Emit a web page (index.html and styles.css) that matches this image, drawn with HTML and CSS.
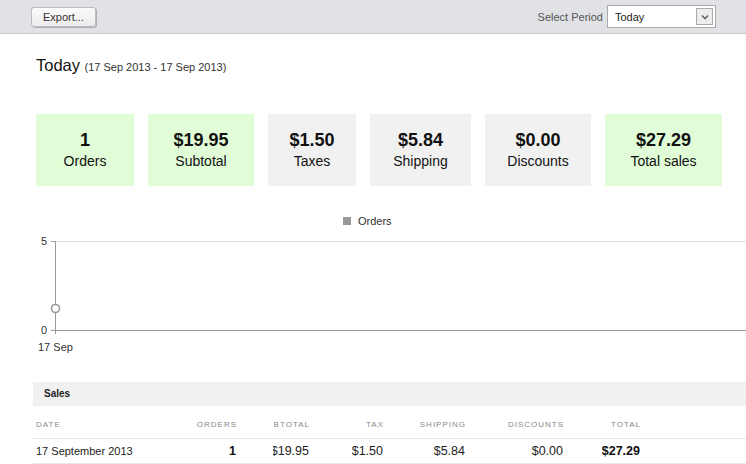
FILE: index.html
```html
<!DOCTYPE html>
<html>
<head>
<meta charset="utf-8">
<link rel="stylesheet" href="styles.css">
</head>
<body>
<div class="topbar">
  <button class="btn">Export...</button>
  <div class="period">
    <span class="period-label">Select Period</span>
    <div class="select">
      <span class="select-value">Today</span>
      <span class="select-arrow">
        <svg width="14" height="14" viewBox="0 0 14 14"><path d="M4 5.5 L7 8.5 L10 5.5" fill="none" stroke="#666" stroke-width="1.6"/></svg>
      </span>
    </div>
  </div>
</div>

<div class="title">
  <span class="title-main">Today</span>
  <span class="title-range">(17 Sep 2013 - 17 Sep 2013)</span>
</div>

<div class="cards">
  <div class="card green"><div class="val">1</div><div class="lbl">Orders</div></div>
  <div class="card green"><div class="val">$19.95</div><div class="lbl">Subtotal</div></div>
  <div class="card grey"><div class="val">$1.50</div><div class="lbl">Taxes</div></div>
  <div class="card grey"><div class="val">$5.84</div><div class="lbl">Shipping</div></div>
  <div class="card grey"><div class="val">$0.00</div><div class="lbl">Discounts</div></div>
  <div class="card green"><div class="val">$27.29</div><div class="lbl">Total sales</div></div>
</div>

<svg class="chart" width="746" height="155" viewBox="0 0 746 155">
  <rect x="343" y="12" width="8" height="8" fill="#999"/>
  <text x="358" y="20" class="ct">Orders</text>
  <line x1="55" y1="36.5" x2="746" y2="36.5" stroke="#ddd" stroke-width="1"/>
  <line x1="51" y1="36.5" x2="55" y2="36.5" stroke="#999" stroke-width="1"/>
  <line x1="55.5" y1="36" x2="55.5" y2="129" stroke="#999" stroke-width="1"/>
  <line x1="51" y1="125.5" x2="746" y2="125.5" stroke="#999" stroke-width="1"/>
  <text x="47" y="40" class="ct" text-anchor="end">5</text>
  <text x="47" y="129" class="ct" text-anchor="end">0</text>
  <circle cx="55.5" cy="103.5" r="4" fill="#fff" stroke="#999" stroke-width="1.6"/>
  <text x="38" y="146" class="ct">17 Sep</text>
</svg>

<div class="panel">Sales</div>
<div class="table">
  <div class="row head">
    <div class="c left">Date</div>
    <div class="c">Orders</div>
    <div class="c clip"><span>Subtotal</span></div>
    <div class="c">Tax</div>
    <div class="c">Shipping</div>
    <div class="c">Discounts</div>
    <div class="c">Total</div>
    <div class="c"></div>
  </div>
  <div class="row data">
    <div class="c left date">17 September 2013</div>
    <div class="c bold">1</div>
    <div class="c clip"><span>$19.95</span></div>
    <div class="c">$1.50</div>
    <div class="c">$5.84</div>
    <div class="c">$0.00</div>
    <div class="c bold">$27.29</div>
    <div class="c"></div>
  </div>
</div>
</body>
</html>
```
FILE: styles.css
```css
* { box-sizing: border-box; }
body {
  margin: 0;
  font-family: "Liberation Sans", Arial, sans-serif;
  color: #222;
  background: #fff;
  width: 746px;
  overflow: hidden;
}
.topbar {
  height: 34px;
  background: #e0e2e5;
  border-bottom: 1px solid #c6c8cb;
  display: flex;
  align-items: flex-start;
  padding-left: 31px;
}
.btn {
  margin: 7px 0 0 0;
  width: 65px;
  height: 20px;
  padding: 0;
  font-family: "Liberation Sans", Arial, sans-serif;
  font-size: 11px;
  color: #333;
  background: linear-gradient(#fbfbfb, #ececec);
  border: 1px solid #bcbcbc;
  border-radius: 3px;
  box-shadow: 1px 1px 0 rgba(0,0,0,0.22);
}
.period {
  margin-left: auto;
  margin-right: 30px;
  margin-top: 5px;
  display: flex;
  align-items: center;
}
.period-label {
  font-size: 11px;
  color: #555;
  margin-right: 4px;
}
.select {
  width: 109px;
  height: 23px;
  background: #fff;
  border: 1px solid #aaa;
  display: flex;
  align-items: center;
  padding-left: 7px;
  padding-right: 2px;
}
.select-value {
  font-size: 11px;
  color: #222;
  flex: 1;
}
.select-arrow {
  width: 17px;
  height: 17px;
  border: 1px solid #aaa;
  background: #ececec;
  display: flex;
  align-items: center;
  justify-content: center;
}
.title {
  padding: 21px 0 0 36px;
  height: 41px;
  line-height: 20px;
}
.title-main {
  font-size: 16.5px;
  color: #111;
}
.title-range {
  font-size: 11px;
  color: #333;
}
.cards {
  margin-top: 39px;
  padding-left: 36px;
  display: flex;
  gap: 14px;
}
.card {
  height: 72px;
  padding-top: 16px;
  display: flex;
  flex-direction: column;
  align-items: center;
  color: #111;
}
.card:nth-child(1) { width: 98px; }
.card:nth-child(2) { width: 106px; }
.card:nth-child(3) { width: 88px; }
.card:nth-child(4) { width: 101px; }
.card:nth-child(5) { width: 106px; }
.card:nth-child(6) { width: 117px; }
.green { background: #e1fdd8; }
.grey { background: #f1f1f1; }
.val {
  font-size: 18px;
  font-weight: bold;
  line-height: 20px;
}
.lbl {
  font-size: 14px;
  line-height: 20px;
  margin-top: 1px;
}
.chart {
  display: block;
  margin-top: 19px;
}
.ct {
  font-family: "Liberation Sans", Arial, sans-serif;
  font-size: 11px;
  fill: #333;
}
.panel {
  margin-top: 22px;
  margin-left: 33px;
  height: 24px;
  line-height: 24px;
  background: #f1f1f1;
  padding-left: 11px;
  font-size: 10px;
  font-weight: bold;
  color: #222;
}
.table {
  margin-left: 33px;
}
.row {
  display: grid;
  grid-template-columns: 127px 76px 73px 74px 82px 98px 77px 1fr;
  align-items: center;
  border-bottom: 1px solid #e8e8e8;
}
.row.head {
  height: 33px;
  padding-top: 5px;
  font-size: 8px;
  letter-spacing: 1px;
  text-transform: uppercase;
  color: #888;
}
.row.head .c { margin-right: -1px; }
.row.data {
  height: 25px;
  font-size: 12.5px;
  color: #222;
}
.c {
  text-align: right;
  white-space: nowrap;
}
.c.left {
  text-align: left;
  padding-left: 3px;
}
.date { font-size: 11px; }
.bold {
  font-weight: bold;
  color: #111;
}
.clip {
  width: 36px;
  justify-self: end;
  overflow: hidden;
  display: flex;
  justify-content: flex-end;
}
```
